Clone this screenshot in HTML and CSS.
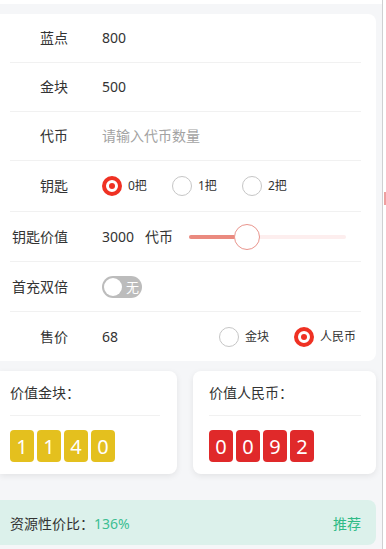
FILE: index.html
```html
<!DOCTYPE html>
<html lang="zh">
<head>
<meta charset="utf-8">
<link rel="stylesheet" href="styles.css">
</head>
<body>
<div class="page">
  <main class="main">
    <div class="topstrip"></div>
    <section class="card form">
      <div class="row r48"><span class="label">蓝点</span><span class="value">800</span></div>
      <div class="row r48"><span class="label">金块</span><span class="value">500</span></div>
      <div class="row r48"><span class="label">代币</span><span class="value placeholder">请输入代币数量</span></div>
      <div class="row r50"><span class="label">钥匙</span>
        <div class="value radios keys">
          <span class="radio-item"><span class="radio on"></span><span class="rlabel">0把</span></span>
          <span class="radio-item"><span class="radio"></span><span class="rlabel">1把</span></span>
          <span class="radio-item"><span class="radio"></span><span class="rlabel">2把</span></span>
        </div>
      </div>
      <div class="row r49"><span class="label">钥匙价值</span>
        <div class="value slider-wrap">
          <span class="num">3000</span><span class="unit">代币</span>
          <div class="slider">
            <div class="track"><div class="fill" style="width:58px"></div></div>
            <div class="thumb"></div>
          </div>
        </div>
      </div>
      <div class="row r49"><span class="label">首充双倍</span>
        <div class="value"><span class="switch"><span class="knob"></span><span class="stext">无</span></span></div>
      </div>
      <div class="row r49 last"><span class="label">售价</span><span class="value">68</span>
        <div class="radios price">
          <span class="radio-item"><span class="radio"></span><span class="rlabel">金块</span></span>
          <span class="radio-item"><span class="radio on"></span><span class="rlabel">人民币</span></span>
        </div>
      </div>
    </section>
    <div class="values">
      <section class="card vcard left">
        <div class="vtitle">价值金块：</div>
        <div class="vdiv"></div>
        <div class="digits gold"><span>1</span><span>1</span><span>4</span><span>0</span></div>
      </section>
      <section class="card vcard right">
        <div class="vtitle">价值人民币：</div>
        <div class="vdiv"></div>
        <div class="digits red"><span>0</span><span>0</span><span>9</span><span>2</span></div>
      </section>
    </div>
    <section class="ratio">
      <span class="rtext">资源性价比：<span class="pct">136%</span></span>
      <span class="rec">推荐</span>
    </section>
  </main>
  <aside class="side"><div class="mark"></div></aside>
</div>
</body>
</html>
```
FILE: styles.css
```css
* { box-sizing: border-box; }
html, body { margin: 0; padding: 0; }
body {
  background: #f5f6f8;
  font-family: "Noto Sans", "Noto Sans CJK SC", sans-serif;
  font-size: 14px;
  color: #333;
  overflow: hidden;
  height: 549px;
}
.page { display: flex; height: 549px; }
.main { flex: 1; padding-right: 6px; }
.topstrip { height: 4px; background: #fff; margin-right: -6px; margin-bottom: 10px; }
.side { width: 4px; border-left: 1px solid #cfd0d2; background: #fff; }
.mark { margin-top: 192px; height: 13px; width: 3px; margin-left: 1px; background: #eea0a0; }

.card { background: #fff; border-radius: 0 8px 8px 0; }
.form { height: 347px; }
.row {
  display: flex;
  align-items: center;
  margin: 0 15px 0 10px;
  border-bottom: 1px solid #f1f1f1;
  line-height: 20px;
}
.row.last { border-bottom: none; }
.r48 { height: 49px; }
.r49 { height: 50px; }
.r50 { height: 51px; }
.row.last.r49 { height: 49px; }
.label { width: 58px; text-align: right; flex-shrink: 0; }
.value { margin-left: 34px; }
.placeholder { color: #a3a3a3; }

.radios { display: flex; align-items: center; }
.radio-item { display: flex; align-items: center; }
.keys .radio-item { width: 70px; }
.price { margin-left: auto; margin-right: 5px; }
.price .radio-item + .radio-item { margin-left: 25px; }
.radio {
  width: 20px; height: 20px;
  border-radius: 50%;
  border: 1.5px solid #c6c6c6;
  background: #fff;
  display: flex; align-items: center; justify-content: center;
  flex-shrink: 0;
}
.radio.on { border: 4px solid #ef3123; }
.radio.on::after {
  content: "";
  width: 6px; height: 6px; border-radius: 50%;
  background: #ef3123;
}
.rlabel { margin-left: 6px; font-size: 12px; color: #333; }

.slider-wrap { display: flex; align-items: center; }
.unit { margin-left: 11px; }
.slider { position: relative; width: 157px; height: 26px; margin-left: 16px; display: flex; align-items: center; }
.track { width: 100%; height: 4px; border-radius: 2px; background: #fdeeee; }
.fill { height: 4px; border-radius: 2px; background: #ea8a7f; }
.thumb {
  position: absolute; left: 45px; top: 0;
  width: 26px; height: 26px; border-radius: 50%;
  background: #fff; border: 1px solid #e9958d;
}

.switch {
  display: flex; align-items: center;
  width: 40px; height: 22px; border-radius: 11px;
  background: #bcbcbc; padding: 0 2px;
}
.knob { width: 18px; height: 18px; border-radius: 50%; background: #fff; }
.stext { color: #fff; font-size: 13px; margin-left: 4px; line-height: 22px; }

.values { display: flex; margin-top: 10px; gap: 16px; }
.vcard { height: 103px; box-shadow: 0 2px 6px rgba(0,0,0,0.08); padding-top: 12px; }
.vcard.left { width: 177px; padding-left: 10px; padding-right: 17px; }
.vcard.right { flex: 1; border-radius: 8px; padding-left: 16px; padding-right: 15px; }
.vtitle { line-height: 20px; height: 20px; }
.vdiv { height: 1px; background: #f1f1f1; margin-top: 12px; }
.digits { display: flex; gap: 3px; margin-top: 14px; }
.digits span {
  width: 24px; height: 32px; border-radius: 4px;
  color: #fff; font-size: 20px;
  display: flex; align-items: center; justify-content: center;
}
.gold span { background: #e4c01e; }
.red span { background: #e0292a; }

.ratio {
  margin-top: 26px; height: 45px;
  background: #dcf1eb; border-radius: 0 8px 8px 0;
  display: flex; align-items: center; justify-content: space-between;
  padding: 0 15px 0 10px;
}
.pct { color: #3dbe92; }
.rec { color: #2fbb86; }
```
